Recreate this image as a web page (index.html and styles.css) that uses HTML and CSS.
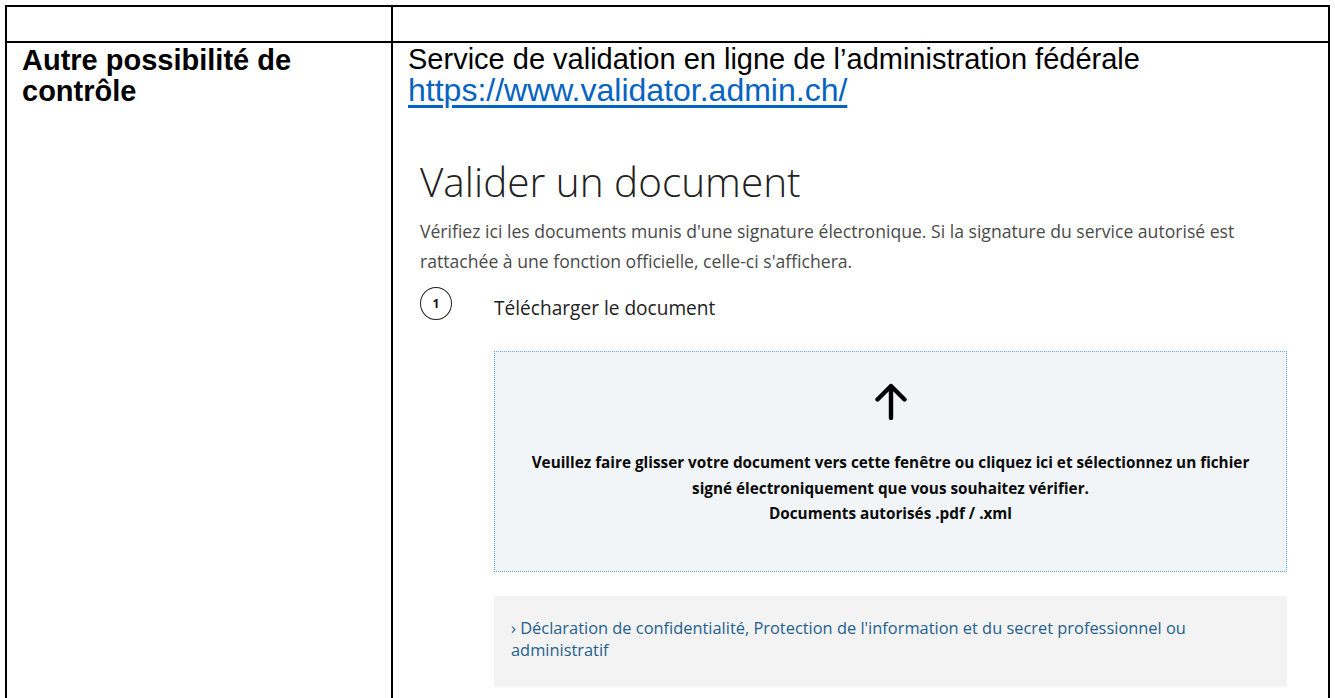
FILE: index.html
```html
<!DOCTYPE html>
<html lang="fr">
<head>
<meta charset="utf-8">
<title>Autre possibilité de contrôle</title>
<link rel="stylesheet" href="styles.css">
</head>
<body>
<div class="doc-table">
  <div class="cell cell-left cell-head"></div>
  <div class="cell cell-right cell-head"></div>
  <div class="cell cell-left">
    <p class="label">Autre possibilité de contrôle</p>
  </div>
  <div class="cell cell-right">
    <p class="intro">Service de validation en ligne de l’administration fédérale</p>
    <p class="intro-link"><a class="doc-link" href="#">https://www.validator.admin.ch/</a></p>

    <div class="site">
      <h1 class="site-title">Valider un document</h1>
      <p class="site-lead">Vérifiez ici les documents munis d'une signature électronique. Si la signature du service autorisé est rattachée à une fonction officielle, celle-ci s'affichera.</p>

      <div class="step">
        <span class="step-num">1</span>
        <span class="step-label">Télécharger le document</span>
      </div>

      <div class="step-body">
        <div class="dropzone">
          <svg class="drop-arrow" viewBox="0 0 36 38" width="36" height="38" aria-hidden="true">
            <path d="M18 36V4 M4.5 17.5L18 4l13.5 13.5" fill="none" stroke="#000" stroke-width="4.4" stroke-linecap="round" stroke-linejoin="round"/>
          </svg>
          <p class="drop-text">Veuillez faire glisser votre document vers cette fenêtre ou cliquez ici et sélectionnez un fichier<br>signé électroniquement que vous souhaitez vérifier.<br>Documents autorisés .pdf / .xml</p>
        </div>

        <div class="privacy">
          <a class="privacy-link" href="#">› Déclaration de confidentialité, Protection de l'information et du secret professionnel ou administratif</a>
        </div>
      </div>
    </div>
  </div>
</div>
</body>
</html>
```

FILE: styles.css
```css
html, body {
  margin: 0;
  padding: 0;
  background: #fff;
  height: 698px;
  overflow: hidden;
}

body {
  font-family: "Liberation Sans", Arial, sans-serif;
  color: #000;
}

/* Word-style two-column table */
.doc-table {
  margin: 5px 0 0 5px;
  width: 1325px;
  box-sizing: border-box;
  border: 2px solid #000;
  border-bottom: none;
  display: grid;
  grid-template-columns: 386px 1fr;
  grid-template-rows: 36px 1fr;
  min-height: 693px;
}

.cell {
  box-sizing: border-box;
}

.cell-left {
  border-right: 2px solid #000;
  padding: 2px 15px 0 15px;
}

.cell-right {
  padding: 1px 15px 0 15px;
}

.cell-head {
  border-bottom: 2px solid #000;
}

.label {
  margin: 0;
  font-weight: bold;
  font-size: 29px;
  line-height: 31px;
}

.intro {
  margin: 0;
  font-size: 29px;
  line-height: 30px;
}

.intro-link {
  margin: 0;
  font-size: 32px;
  line-height: 32px;
}

.doc-link {
  color: #0563c1;
  text-decoration: underline;
  text-underline-offset: 4px;
}

/* Embedded capture of the validator page */
.site {
  margin: 53px 0 0 12px;
  font-family: "Open Sans", "Noto Sans", sans-serif;
}

.site-title {
  margin: 0;
  font-weight: 300;
  font-size: 40.5px;
  line-height: 46px;
  color: #222;
}

.site-lead {
  margin: 11px 0 0 0;
  font-size: 17.6px;
  line-height: 30px;
  color: #4a4a4a;
  max-width: 840px;
}

.step {
  display: flex;
  align-items: center;
  margin-top: 10px;
  gap: 42px;
}

.step-num {
  width: 32px;
  height: 33px;
  box-sizing: border-box;
  border: 1.3px solid #222;
  border-radius: 50%;
  display: flex;
  align-items: center;
  justify-content: center;
  font-size: 12px;
  font-weight: 700;
  color: #111;
}

.step-label {
  padding-top: 9px;
  font-size: 19.1px;
  color: #222;
}

.step-body {
  margin: 30px 0 0 74px;
  width: 793px;
}

.dropzone {
  box-sizing: border-box;
  height: 221px;
  border: 1px dotted #5fa8e8;
  background: #f1f5f8;
  display: flex;
  flex-direction: column;
  align-items: center;
  padding-top: 30px;
}

.drop-arrow {
  display: block;
}

.drop-text {
  margin: 30px 0 0 0;
  text-align: center;
  font-size: 15.3px;
  font-weight: 700;
  line-height: 25.5px;
  color: #0a0a0a;
}

.privacy {
  margin-top: 24px;
  height: 91px;
  box-sizing: border-box;
  background: #f3f3f3;
  padding: 21px 60px 0 17px;
}

.privacy-link {
  font-size: 16.4px;
  line-height: 22px;
  color: #1f5f8f;
  text-decoration: none;
}
```
